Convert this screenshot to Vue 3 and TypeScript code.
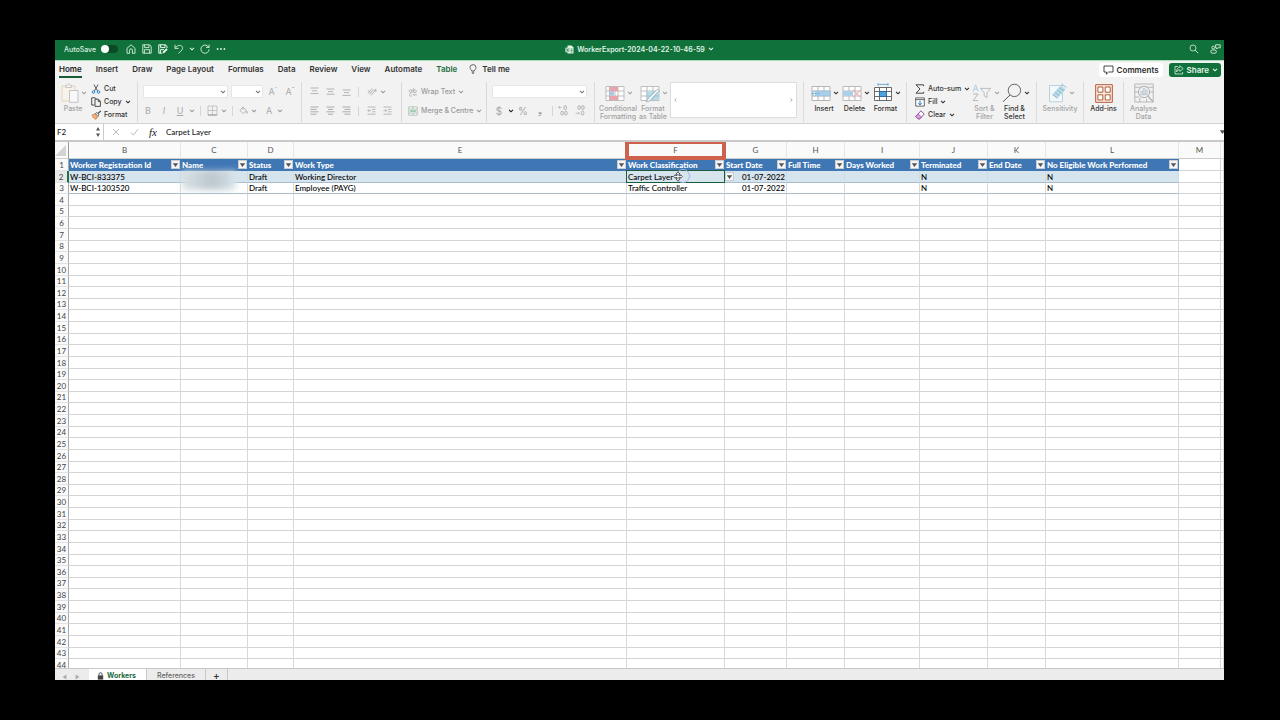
<script setup lang="ts">
import { ref } from 'vue'

interface Icon { w: number; h: number; body: string }
interface BigTool { icon: string; lines: string[]; width: number; menu: boolean; off: boolean }
interface Column { letter: string; key: string; title: string }

const grid = (stroke: string) =>
  `<path d="M1 1.5H19V15.5H1ZM1 6H19M1 11H19M7 1.5V15.5M13 1.5V15.5" fill="#fff" stroke="${stroke}"/>`

const icons: Record<string, Icon> = {
  chev: { w: 6, h: 4, body: '<path d="M1 .8 3 2.8 5 .8" fill="none" stroke="currentColor" stroke-width="1.1"/>' },
  left: { w: 3, h: 6, body: '<path d="M2.2 1.4 .9 3 2.2 4.6" fill="none" stroke="#888" stroke-width=".7"/>' },
  right: { w: 3, h: 6, body: '<path d="M.8 1.4 2.1 3 .8 4.6" fill="none" stroke="#888" stroke-width=".7"/>' },
  home: { w: 10, h: 10, body: '<path d="M1 4.3 5 .8 9 4.3V9.3H6.4V6.2a1.4 1.4 0 0 0-2.8 0V9.3H1Z" fill="none" stroke="#d9efe0" stroke-width=".9"/>' },
  save: { w: 10, h: 10, body: '<path d="M.8.8H7.6L9.2 2.4V9.2H.8ZM2.6.8V3.6H7V.8M2.4 9.2V5.7H7.6V9.2" fill="none" stroke="#d9efe0" stroke-width=".9"/>' },
  saveAs: { w: 10, h: 10, body: '<path d="M4 9.2H.8V.8H7.6L9 2.4V4M2.6.8V3.6H7V.8M2.4 9V5.7H6" fill="none" stroke="#eefaf2" stroke-width="1"/><path d="M4.5 9.5 5 7.6 8.4 4.2 9.7 5.5 6.3 8.9Z" fill="#eefaf2"/>' },
  undo: { w: 10, h: 10, body: '<path d="M1 .8V4.4H4.6M1.2 4.2C3 1.6 6 .6 7.8 2.2 9.6 4 8.6 6 4.4 9.4" fill="none" stroke="#d9efe0" stroke-width=".9"/>' },
  redo: { w: 10, h: 10, body: '<path d="M8.8 3.6A4.1 4.1 0 1 0 9.1 5.4M6 3.4H9.1V.6" fill="none" stroke="#d9efe0" stroke-width=".9"/>' },
  dots: { w: 10, h: 4, body: '<g fill="#e5f5ea"><circle cx="1.6" cy="2" r=".9"/><circle cx="5" cy="2" r=".9"/><circle cx="8.4" cy="2" r=".9"/></g>' },
  doc: { w: 9, h: 9, body: '<path d="M2.5.5H6.5L8.5 2.5V8.5H2.5Z" fill="#e8f5ec"/><path d="M.3 2.6H5V7.3H.3Z" fill="#bfe0cb"/><path d="M1.6 3.6 3.7 6.4M3.7 3.6 1.6 6.4M5.6 4H7.6M5.6 5.5H7.6M5.6 7H7.6" stroke="#13713a" stroke-width=".7"/>' },
  search: { w: 10, h: 10, body: '<circle cx="4" cy="4" r="3" fill="none" stroke="#d9efe0" stroke-width=".8"/><path d="M6.2 6.2 9.2 9.2" stroke="#d9efe0" stroke-width=".9"/>' },
  people: { w: 11, h: 10, body: '<g fill="none" stroke="#d9efe0" stroke-width=".9"><circle cx="3.2" cy="3.6" r="1.4"/><rect x=".8" y="6" width="5.6" height="3.2" rx="1.6"/><path d="M5.6.8H10.2V3.8H7.8L6.6 5V3.8H5.6Z"/></g>' },
  bulb: { w: 8, h: 10, body: '<path d="M2.7 7C2.5 5.7 1 5.3 1 3.6A3 3 0 0 1 7 3.6C7 5.3 5.5 5.7 5.3 7ZM2.7 8.2H5.3M3.2 9.4H4.8" fill="none" stroke="#444" stroke-width=".8"/>' },
  comment: { w: 11, h: 10, body: '<path d="M1 1H10V7H5.6L3.4 9.2V7H1Z" fill="none" stroke="#333" stroke-width=".9" stroke-linejoin="round"/>' },
  share: { w: 10, h: 10, body: '<path d="M4 1.5H1V9H8.6V7M5.8.8 9.2 3.6 5.8 6.4V4.8C4 4.8 3.2 5.4 2.6 7 2.6 4 3.6 2.6 5.8 2.4Z" fill="none" stroke="#d9efe0" stroke-width=".8" stroke-linejoin="round"/>' },
  paste: { w: 18, h: 20, body: '<path d="M1 3H14V18H1Z" fill="#f7f3ea" stroke="#e3d5b8"/><path d="M4.5 4.5V2.5H6A1.6 1.6 0 0 1 9.2 2.5H10.7V4.5Z" fill="#f2f2f2" stroke="#bbb" stroke-width=".8"/><path d="M8.5 7.5H17V19.3H8.5Z" fill="#f8f8f8" stroke="#bdbdbd" stroke-width=".9"/>' },
  cut: { w: 10, h: 10, body: '<path d="M3 .6 6.6 7M7 .6 3.4 7" stroke="#4a4a4a" stroke-width=".9"/><g fill="none" stroke="#2f86c6" stroke-width="1"><circle cx="2.5" cy="8" r="1.3"/><circle cx="7.5" cy="8" r="1.3"/></g>' },
  copy: { w: 10, h: 10, body: '<path d="M3.4 8H.7V.8H4.2L5.4 2M4 2.2H7.4L9.4 4.2V9.4H4ZM7.2 2.4V4.4H9.2" fill="none" stroke="#3c3c3c" stroke-width=".9"/>' },
  brush: { w: 10, h: 10, body: '<path d="M1 5 4.6 3.6 7 6.4 5 9.2C3.6 9.2 1.6 7.4 1 5Z" fill="#f3b07c" stroke="#c8793d" stroke-width=".7"/><path d="M4.4 3.6 6 2.4 8 5 6.8 6.2Z" fill="#fff" stroke="#444" stroke-width=".7"/><path d="M7 3.6 9.8.9" stroke="#444" stroke-width="1.3"/>' },
  borders: { w: 11, h: 11, body: '<path d="M1 1H10V10H1ZM5.5 1V10M1 5.5H10" fill="none" stroke="#bbb" stroke-width=".8"/><path d="M1 10H10" stroke="#999"/>' },
  bucket: { w: 9, h: 9, body: '<path d="M4 1 7.4 4.4 4 7.6.9 4.5ZM4 1V4M7.6 5C8.6 6.4 8.6 7.3 7.8 7.3 7 7.3 7 6.4 7.6 5Z" fill="none" stroke="#aaa" stroke-width=".8"/>' },
  top: { w: 9, h: 9, body: '<path d="M.5 1H8.5M2 3.8H7M.5 6.6H8.5" stroke="#a3a3a3" stroke-width=".8"/>' },
  middle: { w: 9, h: 9, body: '<path d="M.5 2H8.5M2 4.6H7M.5 7.2H8.5" stroke="#a3a3a3" stroke-width=".8"/>' },
  bottom: { w: 9, h: 9, body: '<path d="M.5 3H8.5M2 5.6H7M.5 8.4H8.5" stroke="#a3a3a3" stroke-width=".8"/>' },
  alignL: { w: 9, h: 9, body: '<path d="M.5 1H8.5M.5 3.4H6.5M.5 5.8H8.5M.5 8.2H6.5" stroke="#999" stroke-width=".8"/>' },
  alignC: { w: 9, h: 9, body: '<path d="M.5 1H8.5M2 3.4H7M.5 5.8H8.5M2 8.2H7" stroke="#999" stroke-width=".8"/>' },
  alignR: { w: 9, h: 9, body: '<path d="M.5 1H8.5M2.5 3.4H8.5M.5 5.8H8.5M2.5 8.2H8.5" stroke="#999" stroke-width=".8"/>' },
  orient: { w: 10, h: 9, body: '<path d="M1 6.5 5 1.5M2.6 7.4 6.4 2.6M.8 3.2 3.4 5.6M4 8.4 9 2.6M9 2.6 6.8 3.4M9 2.6 8.8 5" fill="none" stroke="#aaa" stroke-width=".8"/>' },
  outdent: { w: 9, h: 9, body: '<path d="M.5 1H8.5M5 3.4H8.5M5 5.8H8.5M.5 8.2H8.5M4 4.6H.9M2.2 3.3.9 4.6 2.2 5.9" fill="none" stroke="#aaa" stroke-width=".8"/>' },
  indent: { w: 9, h: 9, body: '<path d="M.5 1H8.5M5 3.4H8.5M5 5.8H8.5M.5 8.2H8.5M.5 4.6H3.6M2.4 3.3 3.7 4.6 2.4 5.9" fill="none" stroke="#aaa" stroke-width=".8"/>' },
  wrap: { w: 10, h: 10, body: '<g fill="none" stroke="#b0b0b0" stroke-width=".8"><circle cx="2.6" cy="4" r="1.4"/><path d="M4 2.4V5.6M5.6.8V5.6"/><circle cx="7" cy="4.2" r="1.4"/><path d="M3.8 6.8A1.4 1.4 0 1 0 3.8 9M9 7.8H5.4M6.6 6.6 5.4 7.8 6.6 9"/></g>' },
  merge: { w: 10, h: 10, body: '<path d="M.8.8H9.2V9.2H.8ZM.8 3H9.2M.8 7H9.2M5 .8V3M5 7V9.2" fill="#fff" stroke="#a3b8ad" stroke-width=".8"/><path d="M1.2 3.3H8.8V6.7H1.2Z" fill="#cde6d8"/><path d="M2.2 5H7.8" stroke="#69a98a" stroke-width=".9"/>' },
  incDec: { w: 10, h: 11, body: '<path d="M.6 2.4H3.6M1.8 1 .6 2.4 1.8 3.8" fill="none" stroke="#aaa" stroke-width=".7"/><g fill="none" stroke="#999" stroke-width=".7"><rect x="6" y=".7" width="2.4" height="3.8" rx="1.1"/><rect x="3" y="6.2" width="2.3" height="3.8" rx="1.1"/><rect x="6.8" y="6.2" width="2.3" height="3.8" rx="1.1"/></g>' },
  decDec: { w: 10, h: 11, body: '<path d="M.6 8.2H4.4M3.2 6.8 4.4 8.2 3.2 9.6" fill="none" stroke="#aaa" stroke-width=".7"/><g fill="none" stroke="#999" stroke-width=".7"><rect x="3" y=".7" width="2.3" height="3.8" rx="1.1"/><rect x="6.8" y=".7" width="2.3" height="3.8" rx="1.1"/><rect x="6.4" y="6.2" width="2.4" height="3.8" rx="1.1"/></g>' },
  cond: { w: 20, h: 17, body: `${grid('#bdbdbd')}<path d="M4.5 2H13V6H4.5ZM4.5 11H13V15H4.5Z" fill="#e8a3ad"/><path d="M4.5 6.4H9V10.6H4.5Z" fill="#a9c8e4"/><path d="M4.5 1.5V15.5M10 6V11" stroke="#b9a8ac" stroke-width=".7"/>` },
  fmtTable: { w: 20, h: 17, body: `${grid('#bdbdbd')}<path d="M7.4 6.4H18.6V15H7.4Z" fill="#b5dbe6"/><path d="M7 6V15M13 6V15M7 11H19" stroke="#93c2d2" stroke-width=".7"/><path d="M17.6 4 19.4 5.6 11 14.4C10 16.4 8 16.8 6 16.4 8 15.4 7.6 13.4 9.2 12.6Z" fill="#f4fafb" stroke="#8ba7b0" stroke-width=".8"/>` },
  insert: { w: 20, h: 17, body: `${grid('#b4b4b4')}<path d="M4.5 6.2H19.3V10.8H4.5Z" fill="#a9d0ea" stroke="#8fbad6" stroke-width=".6"/><path d="M9 8.5H.8M3.6 5.8.8 8.5 3.6 11.2" fill="none" stroke="#7fb8dc" stroke-width="1"/>` },
  remove: { w: 20, h: 17, body: `${grid('#b9b9b9')}<path d="M1 6.2H11V10.8H1Z" fill="#a9d0ea"/><path d="M11 4.8 18.8 12.6M18.8 4.8 11 12.6" stroke="#eeb4b4" stroke-width="1.2"/>` },
  format: { w: 20, h: 20, body: '<path d="M5 1.4H15M5 0V2.8M15 0V2.8" stroke="#5fa6d5" stroke-width=".9"/><path d="M1.5 4.5H18.5V17.5H1.5ZM1.5 8.5H18.5M1.5 13.5H18.5M6.5 4.5V17.5M13.5 4.5V17.5" fill="#fff" stroke="#5a5a5a" stroke-width=".9"/><path d="M6.5 8.5H13.5V13.5H6.5Z" fill="#4fa3dc" stroke="#2c6d9c"/>' },
  sum: { w: 10, h: 10, body: '<path d="M8.6 2.2V.8H1L5 5 1 9.2H8.6V7.8" fill="none" stroke="#333" stroke-width=".9"/>' },
  fill: { w: 10, h: 10, body: '<path d="M.7.9H9.3V9.1H.7ZM.7 2.6H9.3" fill="#fff" stroke="#444" stroke-width=".8"/><path d="M5 3.6V7.8M3.3 6.2 5 7.9 6.7 6.2" fill="none" stroke="#1f78b8" stroke-width="1"/>' },
  clear: { w: 10, h: 10, body: '<path d="M5.8.9 9.2 4 5 8.8H3L.8 6.6Z" fill="#fff" stroke="#8b3f96" stroke-width=".9"/><path d="M3 4 6.6 7 5 8.8H3L.8 6.6Z" fill="#d6a5dc" stroke="#8b3f96" stroke-width=".7"/>' },
  sort: { w: 20, h: 18, body: '<path d="M1 7.6 3.6.8 6.2 7.6M2 5.2H5.2" fill="none" stroke="#a9cbe4" stroke-width=".9"/><path d="M1.2 10H6L1.2 16.6H6.2" fill="none" stroke="#b0b0b0" stroke-width=".9"/><path d="M8.6 4.4H18.6L15 8.8V13.6L12.2 12V8.8Z" fill="none" stroke="#b5b5b5" stroke-width=".9"/>' },
  find: { w: 20, h: 20, body: '<circle cx="12.4" cy="7.4" r="6.2" fill="none" stroke="#444" stroke-width=".8"/><path d="M8 12 1 18.8" stroke="#444" stroke-width=".9"/>' },
  sens: { w: 19, h: 20, body: '<path d="M1.5 2.5H14.5V18.8H1.5Z" fill="#f2f7f9" stroke="#b2ced9" stroke-width=".9"/><path d="M4 12 12.6 2.6 17.6 6.6 9 15.6Z" fill="#b7dbe8"/><path d="M5 11.6 9.6 15M7 9.4 11.4 12.8M9.2 7 13.6 10.4M11.2 4.6 16 8M13.6.8 18.4 4.6" stroke="#8bb3c4" stroke-width=".9"/>' },
  addins: { w: 18, h: 19, body: '<path d="M.7.7H17.3V18.3H.7Z" fill="#faf1ec" stroke="#b5562f" stroke-width="1"/><path d="M2.9 3H7.9V8.2H2.9ZM10.2 3H15.2V8.2H10.2ZM2.9 10.8H7.9V16H2.9ZM10.2 10.8H15.2V16H10.2Z" fill="#fff" stroke="#b5562f" stroke-width="1"/>' },
  analyse: { w: 20, h: 20, body: '<path d="M.8 1H19.2V19H.8ZM.8 4.2H19.2M.8 9H5M15 9H19.2M.8 14H5M5.8 14.6V19M12.6 15.6V19" fill="none" stroke="#b0b0b0" stroke-width=".9"/><circle cx="10" cy="9" r="5.6" fill="#f2f2f2" stroke="#a8a8a8" stroke-width=".9"/><path d="M14 13.2 19 18.6" stroke="#a8a8a8" stroke-width="1.1"/><path d="M6.8 8.4H8.6V11.8H6.8ZM9.2 5.6H11V11.8H9.2ZM11.6 7.4H13.2V11.8H11.6Z" fill="none" stroke="#a8bccb" stroke-width=".7"/>' },
  cross: { w: 8, h: 8, body: '<path d="M1 1 7 7M7 1 1 7" stroke="#b3b3b3" stroke-width=".9"/>' },
  tick: { w: 9, h: 8, body: '<path d="M.8 4.6 3.4 7 8.2 1.2" fill="none" stroke="#b3b3b3" stroke-width=".9"/>' },
  stepper: { w: 6, h: 12, body: '<path d="M3 1 5 4.4H1ZM3 11 5 7.6H1Z" fill="#555"/>' },
  funnel: { w: 7, h: 6, body: '<path d="M.8 1.2H6.2L3.5 5Z" fill="#555"/>' },
  corner: { w: 12, h: 13, body: '<path d="M11 1V12H0Z" fill="#d3d3d3"/>' },
  lock: { w: 7, h: 8, body: '<path d="M.8 3.4H6.2V7.6H.8Z" fill="#444"/><path d="M2 3.6V2.2A1.5 1.5 0 0 1 5 2.2V3.6" fill="none" stroke="#444" stroke-width=".9"/>' },
  prev: { w: 5, h: 6, body: '<path d="M4.4.6V5.4L.6 3Z" fill="#aaa"/>' },
  next: { w: 5, h: 6, body: '<path d="M.6.6V5.4L4.4 3Z" fill="#aaa"/>' },
  cursor: { w: 10, h: 11, body: '<path d="M5 .8 6.8 3H5.9V4.6H7.6V3.7L9.4 5.5 7.6 7.3V6.4H5.9V8H6.8L5 10.2 3.2 8H4.1V6.4H2.4V7.3L.6 5.5 2.4 3.7V4.6H4.1V3H3.2Z" fill="#fff" stroke="#222" stroke-width=".7"/>' },
}

const quick = ['home', 'save', 'saveAs', 'undo', 'chev', 'redo', 'dots']
const quickNames: Record<string, string> = {
  home: 'Home', save: 'Save', saveAs: 'Save as', undo: 'Undo', chev: 'Undo history', redo: 'Redo', dots: 'More',
}
const tabs = ['Home', 'Insert', 'Draw', 'Page Layout', 'Formulas', 'Data', 'Review', 'View', 'Automate', 'Table']
const activeTab = ref('Home')

const clipboard = [
  { icon: 'cut', label: 'Cut', menu: false },
  { icon: 'copy', label: 'Copy', menu: true },
  { icon: 'brush', label: 'Format', menu: false },
]
const editing = [
  { icon: 'sum', label: 'Auto-sum', menu: true },
  { icon: 'fill', label: 'Fill', menu: true },
  { icon: 'clear', label: 'Clear', menu: true },
]
const styleTools: BigTool[] = [
  { icon: 'cond', lines: ['Conditional', 'Formatting'], width: 38, menu: true, off: true },
  { icon: 'fmtTable', lines: ['Format', 'as Table'], width: 32, menu: true, off: true },
]
const cellTools: BigTool[] = [
  { icon: 'insert', lines: ['Insert'], width: 30, menu: true, off: false },
  { icon: 'remove', lines: ['Delete'], width: 31, menu: true, off: false },
  { icon: 'format', lines: ['Format'], width: 31, menu: true, off: false },
]
const findTools: BigTool[] = [
  { icon: 'sort', lines: ['Sort &', 'Filter'], width: 29, menu: true, off: true },
  { icon: 'find', lines: ['Find &', 'Select'], width: 31, menu: true, off: false },
]
const tailTools: BigTool[] = [
  { icon: 'sens', lines: ['Sensitivity'], width: 46, menu: true, off: true },
  { icon: 'addins', lines: ['Add-ins'], width: 39, menu: false, off: false },
  { icon: 'analyse', lines: ['Analyse', 'Data'], width: 39, menu: false, off: true },
]

const columns: Column[] = [
  { letter: 'B', key: 'id', title: 'Worker Registration Id' },
  { letter: 'C', key: 'name', title: 'Name' },
  { letter: 'D', key: 'status', title: 'Status' },
  { letter: 'E', key: 'type', title: 'Work Type' },
  { letter: 'F', key: 'cls', title: 'Work Classification' },
  { letter: 'G', key: 'start', title: 'Start Date' },
  { letter: 'H', key: 'full', title: 'Full Time' },
  { letter: 'I', key: 'days', title: 'Days Worked' },
  { letter: 'J', key: 'term', title: 'Terminated' },
  { letter: 'K', key: 'end', title: 'End Date' },
  { letter: 'L', key: 'none', title: 'No Eligible Work Performed' },
]
const workers: Record<string, string>[] = [
  { id: 'W-BCI-833375', status: 'Draft', type: 'Working Director', cls: 'Carpet Layer', start: '01-07-2022', term: 'N', none: 'N' },
  { id: 'W-BCI-1303520', status: 'Draft', type: 'Employee (PAYG)', cls: 'Traffic Controller', start: '01-07-2022', term: 'N', none: 'N' },
]
const blankRows = Array.from({ length: 41 }, (_, i) => i + 4)
const formula = ref('Carpet Layer')
const cellRef = ref('F2')
</script>

<template>
  <main class="stage">
    <div class="window">
      <header class="titlebar">
        <div class="quick">
          <label class="autosave">AutoSave <input type="checkbox" class="toggle" /></label>
          <button v-for="q in quick" :key="q" :class="['ghost', 'q-' + q]" :aria-label="quickNames[q]">
            <svg :width="icons[q].w" :height="icons[q].h" v-html="icons[q].body" />
          </button>
        </div>
        <button class="ghost doc">
          <svg width="9" height="9" v-html="icons.doc.body" />
          <span>WorkerExport-2024-04-22-10-46-59</span>
          <svg width="6" height="4" v-html="icons.chev.body" />
        </button>
        <div class="title-end">
          <button class="ghost" aria-label="Search"><svg width="10" height="10" v-html="icons.search.body" /></button>
          <button class="ghost" aria-label="Presence"><svg width="11" height="10" v-html="icons.people.body" /></button>
        </div>
      </header>

      <nav class="tabs">
        <button
          v-for="t in tabs" :key="t"
          :class="['tab', { active: t === activeTab, context: t === 'Table' }]"
          @click="activeTab = t"
        >{{ t }}</button>
        <button class="tab tell"><svg width="8" height="10" v-html="icons.bulb.body" />Tell me</button>
        <span class="grow"></span>
        <button class="pill"><svg width="11" height="10" v-html="icons.comment.body" />Comments</button>
        <button class="pill share">
          <svg width="10" height="10" v-html="icons.share.body" />Share
          <svg width="6" height="4" v-html="icons.chev.body" />
        </button>
      </nav>

      <section class="ribbon">
        <div class="group clip">
          <button class="big off paste">
            <span class="pic menu"><svg width="18" height="20" v-html="icons.paste.body" /><svg class="arrow" width="6" height="4" v-html="icons.chev.body" /></span>
            <span>Paste</span>
          </button>
          <div class="stack">
            <button v-for="c in clipboard" :key="c.label" class="small">
              <svg :width="icons[c.icon].w" :height="icons[c.icon].h" v-html="icons[c.icon].body" />
              <span>{{ c.label }}</span>
              <svg v-if="c.menu" width="6" height="4" v-html="icons.chev.body" />
            </button>
          </div>
        </div>

        <div class="group font">
          <div class="line">
            <span class="drop wide"><select aria-label="Font name"></select><svg width="6" height="4" v-html="icons.chev.body" /></span>
            <span class="drop size"><select aria-label="Font size"></select><svg width="6" height="4" v-html="icons.chev.body" /></span>
            <button class="ghost letter grow-a" aria-label="Increase font size">A<sup>ˆ</sup></button>
            <button class="ghost letter" aria-label="Decrease font size">A<sup>ˇ</sup></button>
          </div>
          <div class="line marks">
            <button class="ghost letter m">B</button>
            <button class="ghost letter m"><i>I</i></button>
            <button class="ghost letter m u"><u>U</u></button>
            <svg class="c" width="6" height="4" v-html="icons.chev.body" />
            <span class="bar"></span>
            <button class="ghost" aria-label="Borders"><svg width="11" height="11" v-html="icons.borders.body" /></button>
            <svg class="c" width="6" height="4" v-html="icons.chev.body" />
            <span class="bar"></span>
            <button class="ghost" aria-label="Fill colour"><svg width="9" height="9" v-html="icons.bucket.body" /></button>
            <svg class="c" width="6" height="4" v-html="icons.chev.body" />
            <button class="ghost letter fc">A</button>
            <svg class="c" width="6" height="4" v-html="icons.chev.body" />
          </div>
        </div>

        <div class="group align">
          <div class="line">
            <button v-for="a in ['top', 'middle', 'bottom']" :key="a" class="ghost" :aria-label="'Align ' + a"><svg width="9" height="9" v-html="icons[a].body" /></button>
            <span class="bar"></span>
            <button class="ghost" aria-label="Orientation"><svg width="10" height="9" v-html="icons.orient.body" /></button>
            <svg class="near" width="6" height="4" v-html="icons.chev.body" />
          </div>
          <div class="line">
            <button v-for="a in ['alignL', 'alignC', 'alignR']" :key="a" class="ghost" :aria-label="a"><svg width="9" height="9" v-html="icons[a].body" /></button>
            <span class="bar"></span>
            <button class="ghost" aria-label="Decrease indent"><svg width="9" height="9" v-html="icons.outdent.body" /></button>
            <button class="ghost" aria-label="Increase indent"><svg width="9" height="9" v-html="icons.indent.body" /></button>
          </div>
        </div>

        <div class="group wraps">
          <div class="line"><button class="small off"><svg width="10" height="10" v-html="icons.wrap.body" /><span>Wrap Text</span><svg width="6" height="4" v-html="icons.chev.body" /></button></div>
          <div class="line"><button class="small off"><svg width="10" height="10" v-html="icons.merge.body" /><span>Merge &amp; Centre</span><svg width="6" height="4" v-html="icons.chev.body" /></button></div>
        </div>

        <div class="group number">
          <div class="line"><span class="drop fmt"><select aria-label="Number format"></select><svg width="6" height="4" v-html="icons.chev.body" /></span></div>
          <div class="line nums">
            <button class="ghost sym">$</button>
            <svg class="dark" width="6" height="4" v-html="icons.chev.body" />
            <button class="ghost sym">%</button>
            <button class="ghost sym">❟</button>
            <span class="bar"></span>
            <button class="ghost" aria-label="Increase decimals"><svg width="10" height="11" v-html="icons.incDec.body" /></button>
            <button class="ghost" aria-label="Decrease decimals"><svg width="10" height="11" v-html="icons.decDec.body" /></button>
          </div>
        </div>

        <div class="group styles">
          <button v-for="t in styleTools" :key="t.icon" :class="['big', { off: t.off }]" :style="{ width: t.width + 'px' }">
            <span class="pic menu"><svg :width="icons[t.icon].w" :height="icons[t.icon].h" v-html="icons[t.icon].body" /><svg class="arrow" width="6" height="4" v-html="icons.chev.body" /></span>
            <span v-for="l in t.lines" :key="l">{{ l }}</span>
          </button>
          <div class="gallery">
            <button class="ghost" aria-label="Previous styles"><svg width="3" height="6" v-html="icons.left.body" /></button>
            <button class="ghost" aria-label="Next styles"><svg width="3" height="6" v-html="icons.right.body" /></button>
          </div>
        </div>

        <div class="group cells">
          <button v-for="t in cellTools" :key="t.icon" class="big" :style="{ width: t.width + 'px' }">
            <span class="pic menu"><svg :width="icons[t.icon].w" :height="icons[t.icon].h" v-html="icons[t.icon].body" /><svg class="arrow" width="6" height="4" v-html="icons.chev.body" /></span>
            <span v-for="l in t.lines" :key="l">{{ l }}</span>
          </button>
        </div>

        <div class="group edit">
          <div class="stack">
            <button v-for="c in editing" :key="c.label" class="small">
              <svg :width="icons[c.icon].w" :height="icons[c.icon].h" v-html="icons[c.icon].body" />
              <span>{{ c.label }}</span>
              <svg width="6" height="4" v-html="icons.chev.body" />
            </button>
          </div>
          <button v-for="t in findTools" :key="t.icon" :class="['big', { off: t.off }]" :style="{ width: t.width + 'px' }">
            <span class="pic menu"><svg :width="icons[t.icon].w" :height="icons[t.icon].h" v-html="icons[t.icon].body" /><svg class="arrow" width="6" height="4" v-html="icons.chev.body" /></span>
            <span v-for="l in t.lines" :key="l">{{ l }}</span>
          </button>
        </div>

        <div v-for="t in tailTools" :key="t.icon" class="group tail">
          <button :class="['big', { off: t.off }]" :style="{ width: t.width + 'px' }">
            <span :class="['pic', { menu: t.menu }]"><svg :width="icons[t.icon].w" :height="icons[t.icon].h" v-html="icons[t.icon].body" /><svg v-if="t.menu" class="arrow" width="6" height="4" v-html="icons.chev.body" /></span>
            <span v-for="l in t.lines" :key="l">{{ l }}</span>
          </button>
        </div>
      </section>

      <div class="formula">
        <div class="namebox">
          <input v-model="cellRef" aria-label="Name box" />
          <svg width="6" height="12" v-html="icons.stepper.body" />
        </div>
        <button class="ghost" aria-label="Cancel"><svg width="8" height="8" v-html="icons.cross.body" /></button>
        <button class="ghost" aria-label="Enter"><svg width="9" height="8" v-html="icons.tick.body" /></button>
        <button class="ghost fx">fx</button>
        <input v-model="formula" class="bar-input" aria-label="Formula bar" />
        <svg class="expand" width="7" height="6" v-html="icons.funnel.body" />
      </div>

      <div class="sheet">
        <table>
          <colgroup>
            <col class="w-n" />
            <col v-for="c in columns" :key="c.key" :class="'w-' + c.key" />
            <col class="w-m" /><col class="w-rest" />
          </colgroup>
          <thead>
            <tr>
              <th class="corner"><svg width="12" height="13" v-html="icons.corner.body" /></th>
              <th v-for="c in columns" :key="c.key" scope="col">{{ c.letter }}<span v-if="c.key === 'cls'" class="highlight"></span></th>
              <th scope="col">M</th><th></th>
            </tr>
          </thead>
          <tbody>
            <tr class="titles">
              <th class="num" scope="row">1</th>
              <td v-for="c in columns" :key="c.key">
                <div class="title-cell">
                  <span>{{ c.title }}</span>
                  <button class="filter" :aria-label="'Filter ' + c.title"><svg width="7" height="6" v-html="icons.funnel.body" /></button>
                </div>
              </td>
              <td class="plain"></td><td class="plain"></td>
            </tr>
            <tr v-for="(w, i) in workers" :key="w.id" :class="['worker', { band: i === 0 }]">
              <th :class="['num', { current: i === 0 }]" scope="row">{{ i + 2 }}</th>
              <td v-for="c in columns" :key="c.key" :class="{ date: c.key === 'start' }">
                {{ w[c.key] }}
                <span v-if="c.key === 'name' && i === 0" class="smudge"></span>
                <template v-if="c.key === 'cls' && i === 0">
                  <span class="selection"></span>
                  <span class="halo"></span>
                  <svg class="cursor" width="10" height="11" v-html="icons.cursor.body" />
                  <button class="filter pick" aria-label="Choose classification"><svg width="7" height="6" v-html="icons.funnel.body" /></button>
                </template>
              </td>
              <td class="plain"></td><td class="plain"></td>
            </tr>
            <tr v-for="n in blankRows" :key="n">
              <th class="num" scope="row">{{ n }}</th>
              <td v-for="c in columns" :key="c.key"></td>
              <td></td><td></td>
            </tr>
          </tbody>
        </table>
      </div>

      <footer class="sheets">
        <button class="ghost nav" aria-label="Previous sheet"><svg width="5" height="6" v-html="icons.prev.body" /></button>
        <button class="ghost nav" aria-label="Next sheet"><svg width="5" height="6" v-html="icons.next.body" /></button>
        <button class="sheet-tab on"><svg width="7" height="8" v-html="icons.lock.body" />Workers</button>
        <button class="sheet-tab">References</button>
        <button class="sheet-tab add" aria-label="Add sheet">+</button>
      </footer>
    </div>
  </main>
</template>

<style>
body { background: #000; }
</style>

<style scoped>
.stage {
  box-sizing: border-box;
  height: 100vh;
  padding: 40px 56px 40px 55px;
  background: #000;
  font-family: Inter, "Liberation Sans", sans-serif;
  font-size: 7px;
  color: #222;
}
.window { display: flex; flex-direction: column; height: 100%; background: #f2f2f2; overflow: hidden; }
button { font: inherit; color: inherit; padding: 0; margin: 0; border: 0; background: none; white-space: nowrap; }
svg { display: block; flex: none; overflow: visible; }
.ghost { display: flex; align-items: center; justify-content: center; }

.titlebar {
  display: grid; grid-template-columns: 1fr auto 1fr; align-items: center;
  height: 18px; padding-bottom: 2px; flex: none; background: #11713a; color: #d9efe0; border-bottom: 1px solid #a9dcbe;
}
.quick { display: flex; align-items: center; gap: 6px; padding-left: 9px; }
.autosave { display: flex; align-items: center; gap: 5px; margin-right: 2px; font-weight: 500; }
.toggle { appearance: none; position: relative; width: 17px; height: 8px; margin: 0; border-radius: 4px; background: #0a4a26; }
.toggle::after { content: ""; position: absolute; left: 0; top: 0; width: 8px; height: 8px; border-radius: 50%; background: #fff; }
.q-chev { margin: 0 -1px; }
.doc { gap: 3px; font-weight: 600; color: #e3f4e9; }
.title-end { display: flex; justify-content: flex-end; gap: 11px; padding-right: 3px; }

.tabs { display: flex; align-items: center; height: 17px; flex: none; padding: 0 3px 0 4px; font-size: 8px; }
.tab { position: relative; height: 17px; margin-right: 14px; padding: 0 0 1px; font-weight: 600; color: #333; }
.tab.active { color: #1d1d1d; }
.tab.active::after { content: ""; position: absolute; left: 0; right: 0; bottom: 0; height: 2px; background: #185c37; }
.tab.context { color: #1b6b40; margin-right: 12px; }
.tell { display: flex; align-items: center; gap: 5px; }
.grow { flex: 1; }
.pill { display: flex; align-items: center; gap: 3px; height: 14px; padding: 0 4px; border-radius: 3px; background: #fff; font-weight: 600; color: #2c2c2c; }
.pill.share { margin-left: 6px; padding: 0 3px 0 5px; background: #11713a; color: #e3f4e9; }

.ribbon { display: flex; flex: none; height: 40px; padding: 4px 0 1px; border-bottom: 1px solid #d2d2d2; color: #999; overflow: hidden; }
.group { box-sizing: border-box; flex: none; height: 40px; border-right: 1px solid #dadada; }
.group.tail { padding: 0; }
.group.tail:last-child { border-right: 0; }
.line { display: flex; align-items: center; height: 19px; }
.stack { display: flex; flex-direction: column; width: 45px; }
.small { display: flex; align-items: center; gap: 3px; height: 13px; color: #333; font-weight: 500; }
.small.off { color: #999; }
.big { display: flex; flex-direction: column; align-items: center; font-weight: 500; line-height: 8px; color: #333; }
.big.off { color: #a2a2a2; }
.pic { position: relative; display: flex; align-items: center; height: 22px; }
.pic.menu { margin-right: 6px; }
.pic .arrow { position: absolute; left: 100%; top: 9px; margin-left: 2px; }
.clip { display: flex; width: 83px; padding-left: 4px; }
.paste { width: 28px; margin-right: 4px; }
.font { width: 164px; padding-left: 5px; }
.drop { position: relative; display: block; height: 13px; margin-right: 3px; }
.drop select { display: block; appearance: none; width: 100%; height: 13px; border: 1px solid #e6e6e6; background: #fff; border-radius: 1px; }
.drop svg { position: absolute; right: 2px; top: 5px; color: #777; }
.wide { width: 85px; }
.size { width: 32px; }
.fmt { width: 95px; }
.letter { width: 10px; font-size: 9px; color: #aaa; line-height: 11px; }
.letter sup { font-size: 7px; line-height: 7px; align-self: flex-start; }
.grow-a { margin: 0 7px 0 2px; }
.m { margin-right: 6px; }
.m.u { margin-right: 1px; }
.fc { margin-left: 4px; }
.marks .c { margin: 0 3px; }
.bar { width: 1px; height: 10px; margin: 0 6px 0 2px; background: #d6d6d6; }
.align { width: 100px; padding-left: 8px; }
.align .line { gap: 7px; }
.align .bar { margin: 0 1px 0 0; }
.align .near { margin-left: -4px; }
.wraps { width: 85px; padding-left: 6px; }
.number { width: 108px; padding-left: 5px; }
.nums { gap: 7px; padding-left: 2px; }
.nums .bar { margin: 0 -2px 0 0; }
.sym { width: 10px; font-size: 10px; color: #a5a5a5; }
.nums .dark { color: #222; margin: 0 -3px; }
.styles { display: flex; gap: 0; width: 209px; padding-left: 4px; }
.gallery { display: flex; justify-content: space-between; box-sizing: border-box; width: 127px; height: 36px; margin-left: 1px; padding: 0 3px; border: 1px solid #dcdcdc; background: #fff; }
.cells { display: flex; width: 103px; padding-left: 5px; }
.edit { display: flex; width: 130px; padding-left: 8px; }
.edit .stack { width: 54px; margin-right: 1px; }
.pic + span { margin-top: 1px; }

.formula { display: flex; align-items: center; flex: none; height: 16px; background: #fff; border-bottom: 2px solid #c9c9c9; font-family: Lato, "Open Sans", sans-serif; font-size: 8px; }
.formula input { border: 0; outline: 0; padding: 0; background: none; font: inherit; font-weight: 500; color: #222; min-width: 0; }
.namebox { display: flex; align-items: center; justify-content: space-between; box-sizing: border-box; width: 49px; height: 16px; padding: 0 2px; margin-right: 8px; border-right: 1px solid #ccc; }
.namebox input { width: 30px; }
.formula .ghost { margin-right: 10px; }
.formula .fx { margin: 0 9px 0 0; font: italic 11px "Liberation Serif", serif; color: #222; }
.formula .bar-input { flex: 1; }
.expand { margin-right: -2px; }

.sheet { flex: 1; min-height: 0; overflow: hidden; background: #fff; }
table { table-layout: fixed; width: 100%; border-collapse: separate; border-spacing: 0; font-family: Lato, "Open Sans", sans-serif; font-size: 8px; line-height: 10px; }
.w-n { width: 14px; } .w-id { width: 112px; } .w-name { width: 67px; } .w-status { width: 46px; }
.w-cls { width: 98px; } .w-start { width: 62px; } .w-full { width: 58px; } .w-days { width: 75px; }
.w-term { width: 68px; } .w-end { width: 58px; } .w-none { width: 133px; } .w-m { width: 42px; } .w-rest { width: 3px; }
th, td { box-sizing: border-box; height: 12px; padding: 0; border-right: 1px solid #d9d9d9; border-bottom: 1px solid #d4d4d4; white-space: nowrap; position: relative; }
tbody tr:nth-child(8n + 3) > *, tbody tr:nth-child(8n + 5) > *, tbody tr:nth-child(8n) > * { height: 11px; }
thead th { height: 17px; background: #fafafa; font-weight: 400; color: #555; border-right-color: #e6e6e6; border-bottom-color: #ccc; }
.corner { border-right-color: #999; }
.num { background: #fafafa; font-weight: 400; text-align: center; color: #444; border-right-color: #aaa; border-bottom-color: #e2e2e2; }
.num.current { border-right: 2px solid #1d7044; background: #e8e8e8; }
.titles td { background: #3f77b5; border-color: #3f77b5; color: #fff; font-weight: 900; }
.titles td.plain { background: #fff; border-color: #d4d4d4; }
.title-cell { display: flex; justify-content: space-between; align-items: center; height: 11px; padding-left: 1px; }
.filter { display: flex; align-items: center; justify-content: center; width: 9px; height: 9px; background: #f6f6f6; border: 1px solid #c7cdd3; box-sizing: border-box; }
.worker td { padding-left: 1px; color: #000; font-weight: 500; border-bottom-color: #a9bccb; }
.worker td.plain { border-bottom-color: #d4d4d4; }
.band td { background: #d6e4ee; border-right-color: #cddce7; }
.band td.plain { background: #fff; border-right-color: #d9d9d9; }
td.date { text-align: right; padding-right: 1px; }
.highlight { position: absolute; z-index: 2; inset: -2px -2px -2px -2px; border: 4px solid #cd614b; }
.selection { position: absolute; z-index: 1; inset: -1px; border: 1px solid #1c5c3b; }
.halo { position: absolute; z-index: 2; left: 49px; top: -2px; width: 14px; height: 14px; box-sizing: border-box; border: 1px solid #a6b2ec; border-radius: 50%; }
.cursor { position: absolute; z-index: 3; left: 46px; top: 0; }
.pick { position: absolute; z-index: 2; left: 100%; top: 1px; margin-left: 1px; }
.smudge { position: absolute; z-index: 1; left: 1px; top: 0; width: 54px; height: 19px; filter: blur(3px); background: linear-gradient(90deg, #d9e2e6, #bcc7cc 55%, #c9d4da 80%, #dde7ee); }

.sheets { display: flex; flex: none; height: 11px; background: #ececec; border-top: 1px solid #c8c8c8; color: #666; overflow: hidden; }
.nav { width: 13px; padding-top: 4px; }
.nav:first-child { margin-left: 3px; }
.sheet-tab { display: flex; align-items: center; gap: 3px; padding: 2px 10px 0; border-right: 1px solid #c8c8c8; line-height: 8px; font-weight: 500; }
.sheet-tab.on { margin-left: 5px; padding-left: 8px; background: #fff; color: #1b6b40; font-weight: 700; }
.sheet-tab.add { padding: 1px 7px 0; font-size: 10px; line-height: 10px; color: #333; }
</style>
